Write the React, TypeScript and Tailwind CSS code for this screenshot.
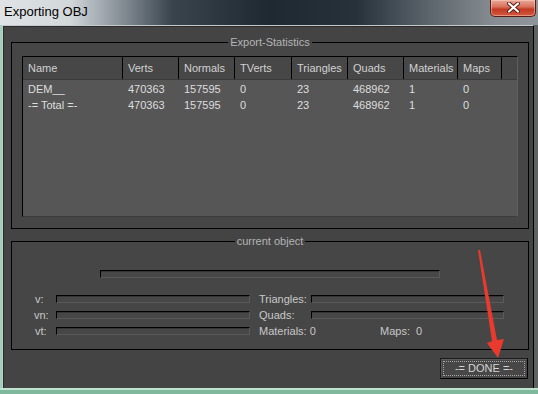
import React from "react";

// Column widths for the statistics list (header + rows share them)
const columns = [
  { label: "Name", w: "w-[100px]" },
  { label: "Verts", w: "w-[56px]" },
  { label: "Normals", w: "w-[56px]" },
  { label: "TVerts", w: "w-[57px]" },
  { label: "Triangles", w: "w-[56px]" },
  { label: "Quads", w: "w-[56px]" },
  { label: "Materials", w: "w-[54px]" },
  { label: "Maps", w: "w-[44px]" },
];

const rows = [
  ["DEM__", "470363", "157595", "0", "23", "468962", "1", "0"],
  ["-= Total =-", "470363", "157595", "0", "23", "468962", "1", "0"],
];

const font = "font-['Liberation_Sans',Arial,sans-serif]";

const Bar = ({ w, h = "h-[8px]" }: { w: string; h?: string }) => (
  <div
    className={`${w} ${h} border border-t-black border-l-black border-b-[#5a5a5a] border-r-[#5a5a5a] bg-[#474747] shadow-[inset_0_1px_0_#363636]`}
  />
);

const Group = ({ title, className, children }: { title: string; className: string; children: React.ReactNode }) => (
  <fieldset className={`border border-black bg-[#464646] ${className}`}>
    <legend className="mx-auto px-[2px] text-[11px] leading-[14px] text-[#b4b4b4]">{title}</legend>
    {children}
  </fieldset>
);

export default function App() {
  return (
    <div className={`relative w-[538px] h-[394px] overflow-hidden flex flex-col bg-[#84bea2] ${font}`}>
      {/* TITLE BAR */}
      <div className="h-[25px] flex items-start justify-between bg-[linear-gradient(90deg,#dfe3e6_0%,#d2d7da_13%,#8a939a_22%,#3a444d_32%,#1f2931_50%,#27313a_66%,#5d666d_80%,#878d92_92%,#8e9499_100%)]">
        <span className="pl-[4px] pt-[4px] text-[13px] leading-[16px] text-black">Exporting OBJ</span>
        <div className="mr-[2px] w-[46px] h-[17px] flex items-center justify-center rounded-b-[5px] border border-t-0 border-[#5a1c12] bg-[linear-gradient(180deg,#eaa898_0%,#d8725c_42%,#c13a24_58%,#d45a3e_100%)] shadow-[inset_0_0_0_1px_rgba(255,220,210,0.45)]">
          <svg width="13" height="11" viewBox="0 0 13 11" className="-mt-[2px]">
            <path d="M2 1.5 L11 9.5 M11 1.5 L2 9.5" stroke="#5a1a10" strokeWidth="4" strokeLinecap="round" />
            <path d="M2 1.5 L11 9.5 M11 1.5 L2 9.5" stroke="#ffffff" strokeWidth="2.2" strokeLinecap="round" />
          </svg>
        </div>
      </div>

      <div className="flex flex-1">
        {/* left frame */}
        <div className="w-[2px] bg-[#9fd0b8]" />

        {/* CLIENT AREA */}
        <div className="flex-1 flex flex-col border-t border-l border-[#c4cacc] border-r border-r-black bg-[#444444] shadow-[inset_1px_1px_0_#2c2c2c] pl-[8px] pr-[4px]">
          <Group title="Export-Statistics" className="mt-[9px] px-[10px] pt-[7px] pb-[11px]">
            <div className="h-[161px] flex flex-col border border-t-black border-l-black border-r-[#5e5e5e] border-b-[#3c3c3c] bg-[#565656]">
              {/* header */}
              <div className="h-[23px] flex bg-[#474747] border-b border-[#3a3a3a] text-[11px] text-[#d2d2d2]">
                {columns.map((c) => (
                  <div key={c.label} className={`${c.w} shrink-0 border-r border-black pl-[5px] flex items-center`}>
                    {c.label}
                  </div>
                ))}
                <div className="flex-1" />
              </div>
              {/* body */}
              <div className="pt-[1px] text-[11px] text-[#dedede]">
                {rows.map((r, i) => (
                  <div key={i} className="h-[16px] flex items-center">
                    {r.map((v, j) => (
                      <div key={j} className={`${columns[j].w} shrink-0 pl-[5px]`}>
                        {v}
                      </div>
                    ))}
                  </div>
                ))}
              </div>
            </div>
          </Group>

          <Group title="current object" className="mt-[5px] pb-[10px]">
            <div className="mt-[22px] pl-[88px]">
              <Bar w="w-[340px]" />
            </div>
            <div className="mt-[13px] flex flex-col text-[11px] text-[#c8c8c8]">
              <div className="h-[16px] flex items-center pl-[23px]">
                <span className="w-[21px]">v:</span>
                <Bar w="w-[194px]" />
                <span className="ml-[9px] w-[52px]">Triangles:</span>
                <Bar w="w-[193px]" />
              </div>
              <div className="h-[16px] flex items-center pl-[22px]">
                <span className="w-[22px]">vn:</span>
                <Bar w="w-[194px]" />
                <span className="ml-[9px] w-[52px]">Quads:</span>
                <Bar w="w-[193px]" />
              </div>
              <div className="h-[16px] flex items-center pl-[23px]">
                <span className="w-[21px]">vt:</span>
                <Bar w="w-[194px]" />
                <span className="ml-[9px] w-[121px]">Materials: 0</span>
                <span>Maps:&nbsp; 0</span>
              </div>
            </div>
          </Group>

          <div className="mt-[8px] flex justify-end pr-[1px]">
            <button className="w-[88px] h-[21px] p-[2px] border border-[#1c1c1c] border-r-black border-b-black bg-[#474747] shadow-[inset_1px_1px_0_#5a5a5a]">
              <span className="h-full flex items-center justify-center border border-dotted border-[#a8a8a8] text-[11px] text-[#d4d4d4]">
                -= DONE =-
              </span>
            </button>
          </div>
        </div>

        {/* right frame */}
        <div className="w-[4px] bg-[#5c6361]" />
      </div>

      {/* bottom frame */}
      <div className="h-[6px] border-t-2 border-[#bfe3d1] bg-[#7fb89c]" />

      {/* red annotation arrow drawn over the dialog */}
      <svg className="absolute left-[470px] top-[245px] pointer-events-none" width="40" height="120" viewBox="0 0 40 120">
        <polygon points="8,5 10,5 27,95 34,94 28,113 17,98 22,96" fill="#ea3a2e" />
      </svg>
    </div>
  );
}
